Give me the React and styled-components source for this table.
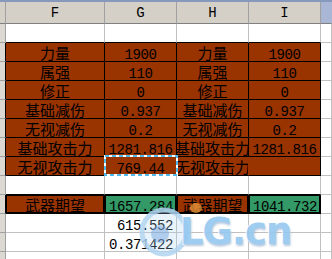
import React from "react";
import styled, { createGlobalStyle } from "styled-components";

const GRID = "#c0c0c0";
const HEAD_LINE = "#a0a0a0";
const BROWN = "#993300";
const GREEN = "#339966";
const BLACK = "#000000";

const Global = createGlobalStyle`
  html, body { margin: 0; padding: 0; background: #fff; }
  body { width: 332px; height: 259px; overflow: hidden; }
`;

const Sheet = styled.div`
  position: relative;
  width: 332px;
  height: 259px;
  overflow: hidden;
  background: #fff;
`;

const TopEdge = styled.div`
  height: 2px;
  background: #8698bc;
`;

const Grid = styled.div`
  display: grid;
  grid-template-columns: 6px 99px 72px 72px 72px 11px;
  grid-template-rows: 22px repeat(13, 19px);
`;

const ColHead = styled.div`
  box-sizing: border-box;
  display: flex;
  align-items: center;
  justify-content: center;
  background: ${(p) => (p.$active ? "#aab6d6" : "#d4d0c8")};
  border-right: 1px solid ${(p) => (p.$active ? "#aab6d6" : HEAD_LINE)};
  border-bottom: 1px solid #808080;
  font-family: "Liberation Mono", monospace;
  font-size: 14px;
  color: #000;
  padding-top: 1px;
`;

const RowHead = styled.div`
  box-sizing: border-box;
  background: #dcd9d2;
  border-right: 1px solid ${(p) => p.$edge || HEAD_LINE};
  border-bottom: 1px solid ${HEAD_LINE};
`;

const Cell = styled.div`
  position: relative;
  box-sizing: border-box;
  min-width: 0;
  background: ${(p) => p.$bg || "#fff"};
  border-right: 1px solid ${(p) => p.$right || GRID};
  border-bottom: 1px solid ${(p) => p.$bottom || GRID};
  box-shadow: ${(p) =>
    p.$boxed ? `inset 1px 1px 0 ${BLACK}, inset -1px -1px 0 ${BLACK}` : "none"};
  display: flex;
  align-items: flex-end;
  justify-content: ${(p) => (p.$align === "right" ? "flex-end" : "center")};
  padding-right: ${(p) => (p.$align === "right" ? "3px" : "0")};
  overflow: ${(p) => (p.$open ? "visible" : "hidden")};
`;

const Label = styled.span`
  font-family: "Noto Sans CJK SC", "Noto Sans CJK JP", sans-serif;
  font-size: 15px;
  line-height: 15px;
  color: #000;
  white-space: nowrap;
  margin-bottom: 1px;
`;

const Num = styled.span`
  font-family: "Liberation Mono", monospace;
  font-size: 14px;
  line-height: 14px;
  letter-spacing: -0.4px;
  color: #000;
  white-space: nowrap;
  margin-bottom: -1px;
`;

const Marquee = styled.svg`
  position: absolute;
  top: -2px;
  left: -1px;
  z-index: 2;
  pointer-events: none;
`;

const Mark = styled.svg`
  position: absolute;
  left: 134px;
  top: 198px;
  z-index: 3;
  pointer-events: none;
`;

const MarkText = styled.span`
  position: absolute;
  left: 180px;
  top: 213px;
  z-index: 3;
  font-family: "DejaVu Sans", sans-serif;
  font-weight: bold;
  font-size: 37px;
  line-height: 1;
  letter-spacing: -1px;
  color: #94c8f0;
  -webkit-text-stroke: 2px #fff;
  paint-order: stroke fill;
  text-shadow: 1px 2px 2px rgba(60, 110, 170, 0.4);
  opacity: 0.9;
`;

const stats = [
  ["力量", "1900", "力量", "1900"],
  ["属强", "110", "属强", "110"],
  ["修正", "0", "修正", "0"],
  ["基础减伤", "0.937", "基础减伤", "0.937"],
  ["无视减伤", "0.2", "无视减伤", "0.2"],
  ["基础攻击力", "1281.816", "基础攻击力", "1281.816"],
  ["无视攻击力", "769.44", "无视攻击力", ""],
];

const below = {
  11: ["", "615.552", "", ""],
  12: ["", "0.371422", "", ""],
};

const text = (value, i) =>
  !value ? null : i % 2 === 0 ? <Label>{value}</Label> : <Num>{value}</Num>;

const SelectBox = () => (
  <Marquee width="74" height="21">
    <rect x="1" y="1" width="72" height="19" fill="none" stroke="#fff" strokeWidth="2" />
    <rect
      x="1"
      y="1"
      width="72"
      height="19"
      fill="none"
      stroke="#4cb8ec"
      strokeWidth="2"
      strokeDasharray="4 3"
    />
  </Marquee>
);

const bodyRow = (r) => {
  const tableRow = r >= 2 && r <= 8;
  const cells = [<RowHead key="h" $edge={tableRow || r === 10 ? BLACK : undefined} />];

  for (let c = 1; c <= 4; c++) {
    const i = c - 1;
    if (tableRow) {
      const v = stats[r - 2][i];
      const open = r === 8 && c === 2;
      cells.push(
        <Cell
          key={c}
          $bg={BROWN}
          $bottom={BLACK}
          $right={r === 8 && c === 3 ? BROWN : BLACK}
          $open={open}
        >
          {text(v, i)}
          {open && <SelectBox />}
        </Cell>
      );
    } else if (r === 10) {
      const label = i % 2 === 0;
      cells.push(
        <Cell
          key={c}
          $bg={label ? BROWN : GREEN}
          $bottom={BLACK}
          $right={BLACK}
          $boxed
          $align={label ? "center" : "right"}
        >
          {label ? <Label>武器期望</Label> : <Num>{c === 2 ? "1657.284" : "1041.732"}</Num>}
        </Cell>
      );
    } else {
      const v = below[r] ? below[r][i] : "";
      cells.push(
        <Cell key={c} $bottom={r === 1 || r === 9 ? BLACK : GRID} $align="right">
          {v && <Num>{v}</Num>}
        </Cell>
      );
    }
  }
  cells.push(<Cell key="j" />);
  return cells;
};

export default function App() {
  const rows = [];
  for (let r = 1; r <= 13; r++)
    rows.push(...bodyRow(r).map((el, k) => React.cloneElement(el, { key: `${r}-${k}` })));

  return (
    <>
      <Global />
      <Sheet>
        <TopEdge />
        <Grid>
          <ColHead />
          <ColHead>F</ColHead>
          <ColHead>G</ColHead>
          <ColHead>H</ColHead>
          <ColHead>I</ColHead>
          <ColHead $active />
          {rows}
        </Grid>
        <Mark width="72" height="60">
          <ellipse cx="62" cy="10" rx="6" ry="5" fill="#f0a040" opacity="0.7" />
          <circle
            cx="30"
            cy="34"
            r="22"
            fill="rgba(170,208,242,0.3)"
            stroke="#b2d4f2"
            strokeWidth="5"
            opacity="0.85"
          />
          <circle cx="26" cy="36" r="9" fill="rgba(110,160,220,0.45)" />
        </Mark>
        <MarkText>LG.cn</MarkText>
      </Sheet>
    </>
  );
}
